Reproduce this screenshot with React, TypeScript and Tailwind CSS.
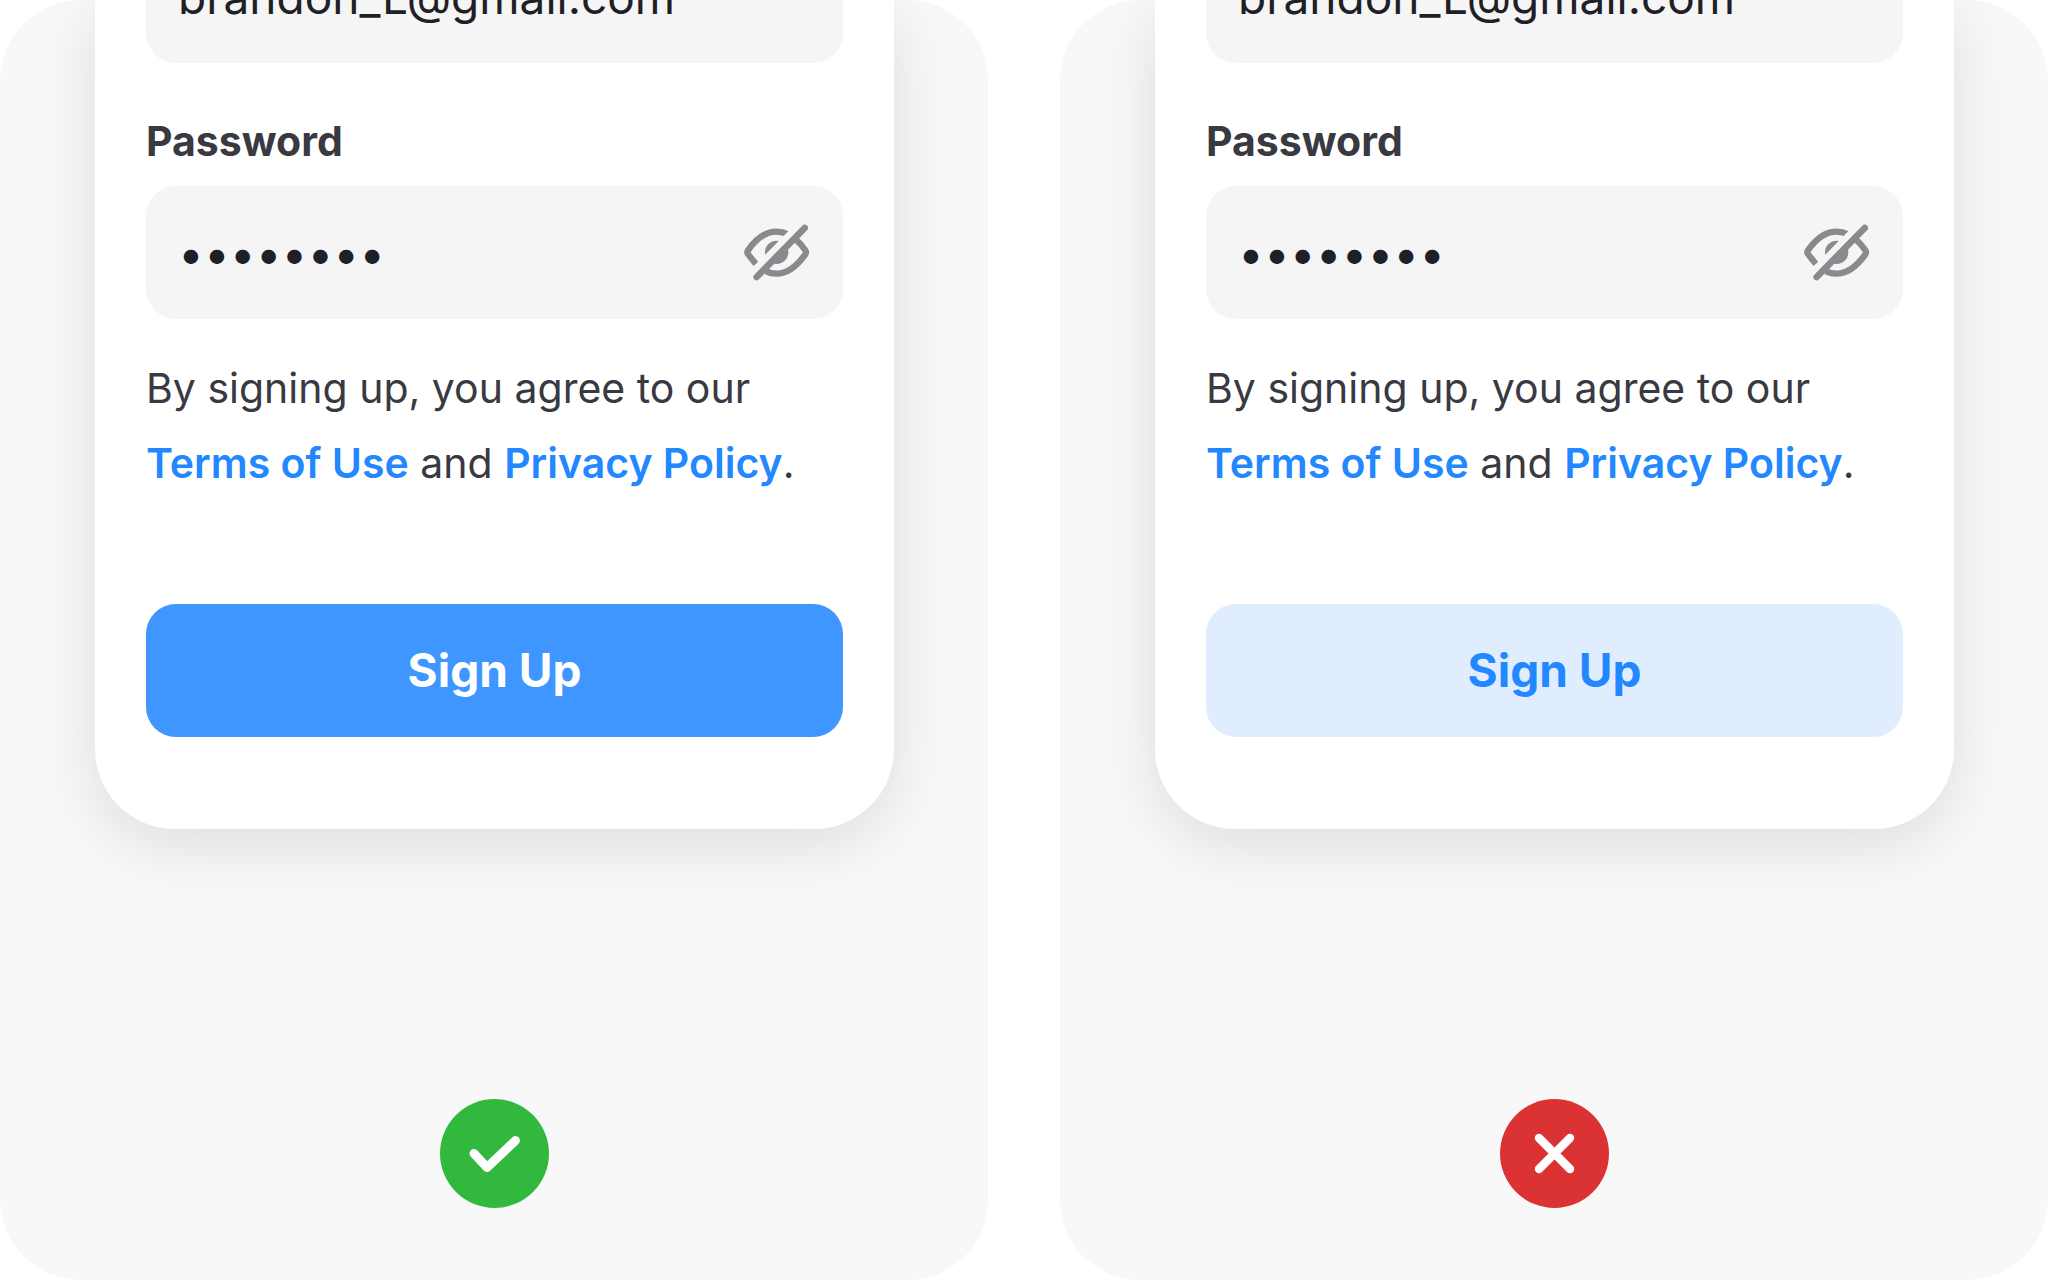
import { useState } from 'react';
import clsx from 'clsx';

type Variant = 'good' | 'bad';

const EyeOffIcon = () => (
  <svg viewBox="66 69 207 177" className="h-[59px] w-[69px]" fill="none" aria-hidden="true">
    <g stroke="#8a898e" strokeWidth="19">
      <path d="M108 192C99 182 92 173 84 162Q80 157 84 151C108 117 138 95 169 95Q188 95 206 104" />
      <path d="M228 119Q243 132 256 151Q260 157 256 163C231 198 201 221 169 221Q153 221 138 214" />
    </g>
    <circle cx="170" cy="157" r="35" fill="#8a898e" />
    <path d="M97 218L241 71" stroke="#f5f5f5" strokeWidth="20" />
    <path d="M110 231L254 84" stroke="#8a898e" strokeWidth="20" strokeLinecap="round" />
  </svg>
);

const StatusBadge = ({ variant }: { variant: Variant }) => (
  <svg
    viewBox="0 0 109 109"
    className="size-[109px]"
    fill="none"
    stroke="white"
    strokeLinecap="round"
    strokeLinejoin="round"
    role="img"
    aria-label={variant === 'good' ? 'Do' : "Don't"}
  >
    <circle cx="54.5" cy="54.5" r="54.5" stroke="none" fill={variant === 'good' ? '#32b83d' : '#db3333'} />
    {variant === 'good' ? (
      <path d="M34 54.5L47 68.5L75.5 41.5" strokeWidth="9" />
    ) : (
      <path d="M39 39L70 70M70 39L39 70" strokeWidth="8.4" />
    )}
  </svg>
);

const fieldClass = 'h-[133px] w-full rounded-[30px] bg-[#f5f5f5] pl-8 text-[#1f1f27] outline-none';

const SignUpPanel = ({ variant }: { variant: Variant }) => {
  const [email, setEmail] = useState('brandon_L@gmail.com');
  const [password, setPassword] = useState('password');
  const [visible, setVisible] = useState(false);

  return (
    <section className="flex min-h-screen flex-1 flex-col items-center justify-between overflow-hidden rounded-[80px] bg-[#f8f8f8] pr-[94px] pb-[72px] pl-[95px]">
      <form
        onSubmit={(e) => e.preventDefault()}
        className="w-full overflow-hidden rounded-b-[80px] bg-white px-[51px] pb-[92px] shadow-[0_16px_64px_rgba(0,0,0,0.11)]"
      >
        <input
          type="email"
          aria-label="Email"
          value={email}
          onChange={(e) => setEmail(e.target.value)}
          className={clsx(fieldClass, '-mt-[70px] block pr-8 text-[46px]')}
        />

        <label
          htmlFor={`password-${variant}`}
          className="mt-[54px] mb-[21px] block text-[41px] leading-[48px] font-bold text-[#393941]"
        >
          Password
        </label>
        <div className="relative">
          <input
            id={`password-${variant}`}
            type={visible ? 'text' : 'password'}
            value={password}
            onChange={(e) => setPassword(e.target.value)}
            className={clsx(fieldClass, 'block pr-28 text-[46px]')}
          />
          <button
            type="button"
            aria-label="Show password"
            onClick={() => setVisible(!visible)}
            className="absolute inset-y-0 right-8 flex items-center"
          >
            <EyeOffIcon />
          </button>
        </div>

        <p className="mt-8 text-[41px] leading-[75px] text-[#393941]">
          By signing up, you agree to our{' '}
          <a href="#terms" className="font-semibold text-[#2388ff]">Terms of Use</a> and{' '}
          <a href="#privacy" className="font-semibold text-[#2388ff]">Privacy Policy</a>.
        </p>

        <button
          type="submit"
          className={clsx(
            'mt-[103px] block h-[133px] w-full rounded-[30px] text-[46px] font-bold',
            variant === 'good' ? 'bg-[#4096ff] text-white' : 'bg-[#e0edff] text-[#2388ff]'
          )}
        >
          Sign Up
        </button>
      </form>

      <StatusBadge variant={variant} />
    </section>
  );
};

const App = () => {
  return (
    <main className="flex min-h-screen gap-[72px] bg-white font-['Inter',sans-serif]">
      <SignUpPanel variant="good" />
      <SignUpPanel variant="bad" />
    </main>
  );
};

export default App;
